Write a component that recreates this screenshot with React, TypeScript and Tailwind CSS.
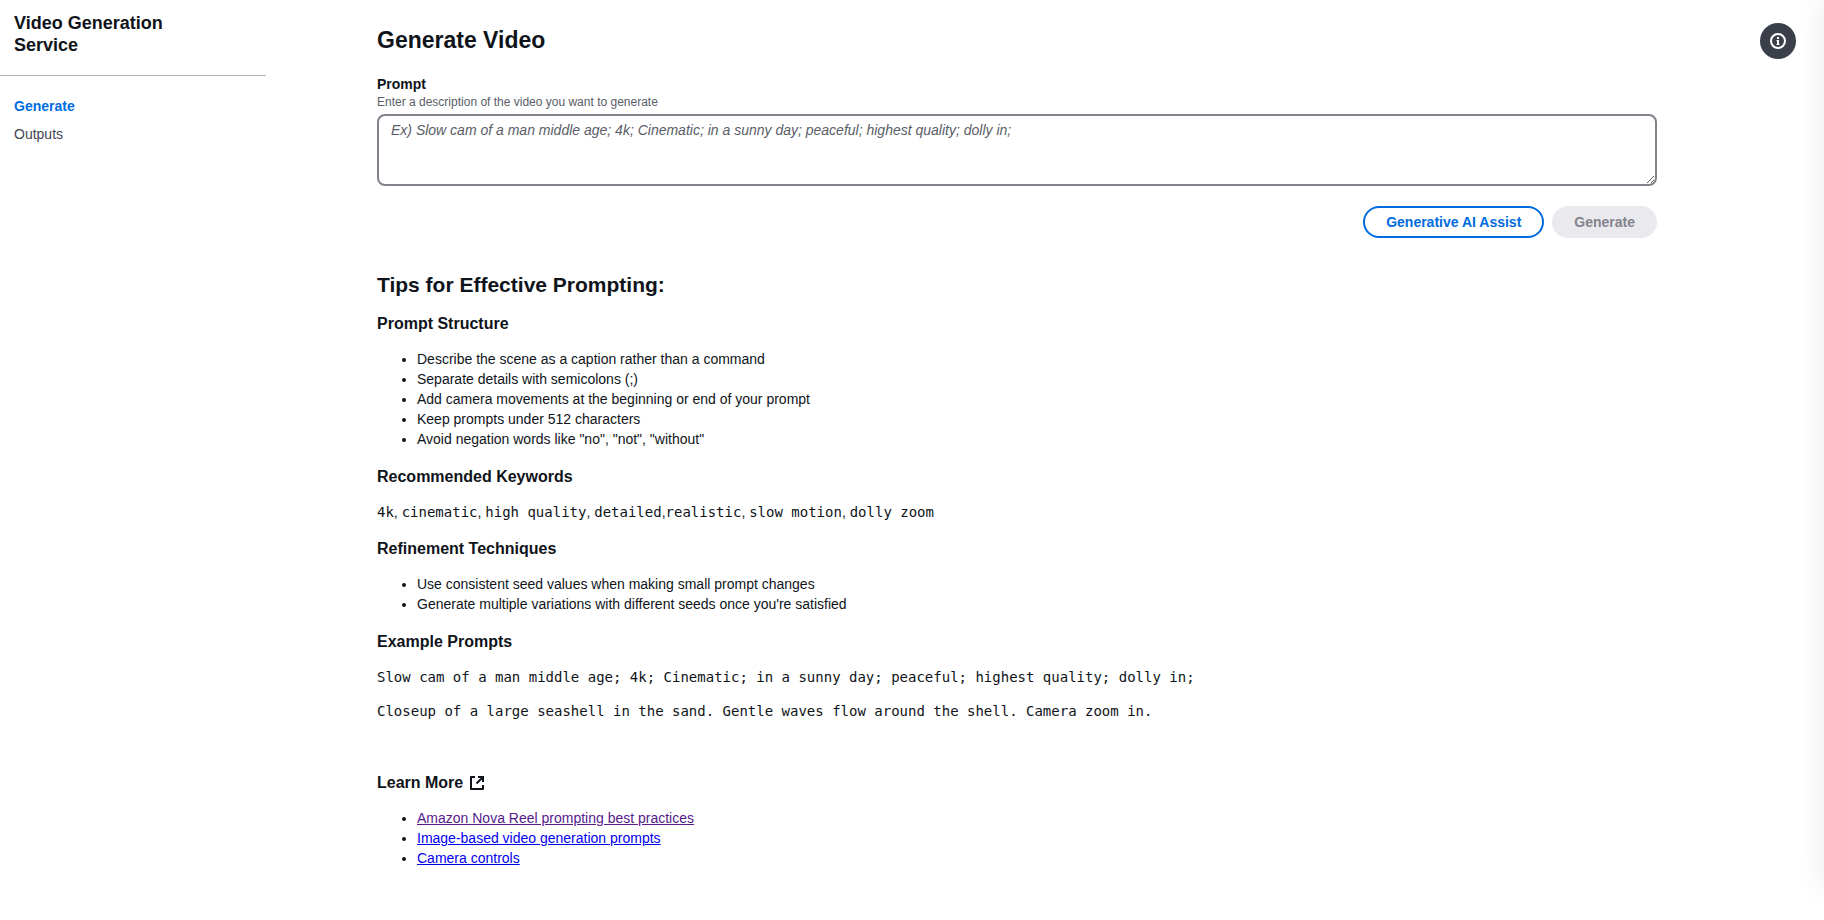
import React from 'react';

const structure = [
  'Describe the scene as a caption rather than a command',
  'Separate details with semicolons (;)',
  'Add camera movements at the beginning or end of your prompt',
  'Keep prompts under 512 characters',
  'Avoid negation words like "no", "not", "without"',
];

const refinement = [
  'Use consistent seed values when making small prompt changes',
  "Generate multiple variations with different seeds once you're satisfied",
];

function Heading({ children }: { children: React.ReactNode }) {
  return <h3 className="flex items-center gap-1.5 text-base leading-[21px] font-bold">{children}</h3>;
}

function Bullets({ children }: { children: React.ReactNode }) {
  return <ul className="mt-[15px] mb-[17px] list-disc pl-10">{children}</ul>;
}

function Code({ children }: { children: React.ReactNode }) {
  return <code className="font-['DejaVu_Sans_Mono',monospace] text-sm leading-4">{children}</code>;
}

function ExternalIcon() {
  return (
    <svg viewBox="0 0 16 16" className="size-4" fill="none" stroke="currentColor" strokeWidth="2" aria-hidden="true">
      <path d="M9 2h5v5M7.5 8.5L14 2" />
      <path d="M14 10v4H2V2h4" strokeLinejoin="round" />
    </svg>
  );
}

function InfoIcon() {
  return (
    <svg viewBox="0 0 16 16" className="size-4" fill="none" stroke="currentColor" strokeWidth="2" aria-hidden="true">
      <circle cx="8" cy="8" r="7" />
      <path d="M8 12V7M8 4v2" />
      <path d="M6.5 7.5H8M6.5 11.5h3" strokeWidth="1" />
    </svg>
  );
}

export default function App() {
  return (
    <div className="relative flex min-h-screen overflow-hidden bg-white font-['Liberation_Sans',Arial,sans-serif] text-sm leading-5 text-[#0f141a]">
      <aside className="w-[266px] shrink-0">
        <header className="border-b border-[#b4b4bb] pt-3 pr-20 pb-[19px] pl-3.5">
          <h2 className="text-lg leading-[22px] font-bold">Video Generation Service</h2>
        </header>
        <nav className="flex flex-col gap-2 px-3.5 pt-5">
          <a href="#generate" className="font-bold text-[#006ce0]">Generate</a>
          <a href="#outputs" className="text-[#424650]">Outputs</a>
        </nav>
      </aside>
      <main className="ml-[111px] min-w-0 flex-1 pt-[25px] pb-10">
        <h1 className="text-[23px] leading-[30px] font-bold">Generate Video</h1>
        <label htmlFor="prompt" className="mt-[19px] block font-bold">Prompt</label>
        <p id="hint" className="text-xs leading-4 text-[#5a5d67]">Enter a description of the video you want to generate</p>
        <textarea id="prompt" aria-describedby="hint" className="mt-1 block h-[72px] w-full resize-y rounded-lg border-2 border-[#82828b] px-3 py-1 placeholder:text-[#5a5d67] placeholder:italic" placeholder="Ex) Slow cam of a man middle age; 4k; Cinematic; in a sunny day; peaceful; highest quality; dolly in;" />
        <div className="mt-5 flex justify-end gap-2">
          <button type="button" className="h-8 rounded-full border-2 border-[#006ce0] px-[21px] font-bold text-[#006ce0]">Generative AI Assist</button>
          <button type="button" disabled className="h-8 rounded-full bg-[#e9e9ee] px-[22px] font-bold text-[#84848d]">Generate</button>
        </div>
        <h2 className="mt-[35px] mb-4 text-[21px] leading-6 font-bold">Tips for Effective Prompting:</h2>
        <Heading>Prompt Structure</Heading>
        <Bullets>{structure.map((t) => <li key={t}>{t}</li>)}</Bullets>
        <Heading>Recommended Keywords</Heading>
        <p className="mt-[15px] mb-4">
          <Code>4k</Code>, <Code>cinematic</Code>, <Code>high quality</Code>, <Code>detailed</Code>,<Code>realistic</Code>, <Code>slow motion</Code>, <Code>dolly zoom</Code>
        </p>
        <Heading>Refinement Techniques</Heading>
        <Bullets>{refinement.map((t) => <li key={t}>{t}</li>)}</Bullets>
        <Heading>Example Prompts</Heading>
        <div className="mt-[15px] mb-[51px] flex flex-col gap-3.5">
          <p><Code>Slow cam of a man middle age; 4k; Cinematic; in a sunny day; peaceful; highest quality; dolly in;</Code></p>
          <p><Code>Closeup of a large seashell in the sand. Gentle waves flow around the shell. Camera zoom in.</Code></p>
        </div>
        <Heading>Learn More <ExternalIcon /></Heading>
        <Bullets>
          <li><a href="#practices" className="text-[#551a8b] underline">Amazon Nova Reel prompting best practices</a></li>
          <li><a href="#image-prompts" className="text-[#0000ee] underline">Image-based video generation prompts</a></li>
          <li><a href="#camera" className="text-[#0000ee] underline">Camera controls</a></li>
        </Bullets>
      </main>
      <div className="flex w-[167px] shrink-0 items-start justify-end pt-[23px] pr-7">
        <button type="button" aria-label="Open information panel" className="grid size-9 place-items-center rounded-full bg-[#3a3f49] text-white">
          <InfoIcon />
        </button>
      </div>
      <div aria-hidden="true" className="pointer-events-none absolute top-0 bottom-10 left-full w-20 shadow-[0_0_32px_rgba(0,7,22,0.09)]" />
    </div>
  );
}
